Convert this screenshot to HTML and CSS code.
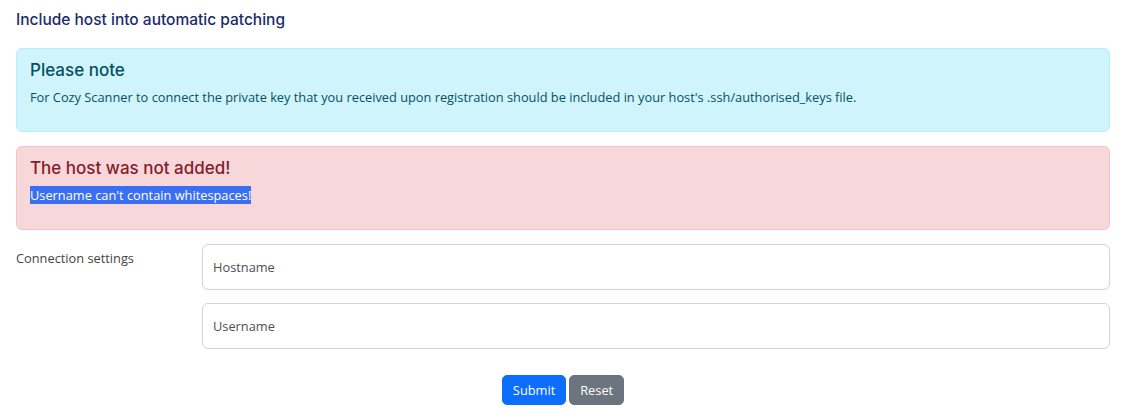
FILE: index.html
```html
<!DOCTYPE html>
<html lang="en">
<head>
<meta charset="utf-8">
<title>Include host into automatic patching</title>
<link rel="stylesheet" href="styles.css">
</head>
<body>
<div class="page">
  <h2 class="page-title">Include host into automatic patching</h2>

  <div class="alert alert-info">
    <h4 class="alert-heading">Please note</h4>
    <p class="alert-text">For Cozy Scanner to connect the private key that you received upon registration should be included in your host's .ssh/authorised_keys file.</p>
  </div>

  <div class="alert alert-danger">
    <h4 class="alert-heading">The host was not added!</h4>
    <p class="alert-text"><span class="selected">Username can't contain whitespaces!</span></p>
  </div>

  <form class="form">
    <div class="form-row">
      <label class="form-label">Connection settings</label>
      <div class="form-fields">
        <input class="form-input" type="text" placeholder="Hostname">
        <input class="form-input" type="text" placeholder="Username">
      </div>
    </div>
    <div class="form-actions">
      <button type="submit" class="btn btn-primary">Submit</button>
      <button type="reset" class="btn btn-secondary">Reset</button>
    </div>
  </form>
</div>
</body>
</html>
```

FILE: styles.css
```css
* { box-sizing: border-box; }

body {
  margin: 0;
  background: #ffffff;
  font-family: "Open Sans", "Noto Sans", sans-serif;
  font-size: 12.8px;
  color: #212529;
}

.page {
  padding: 11px 15px 16px 16px;
}

.page-title {
  margin: 0 0 19px 0;
  font-family: Inter, "Noto Sans", sans-serif;
  font-weight: 500;
  font-size: 15.5px;
  line-height: 18px;
  color: #1a2c6b;
}

.alert {
  border: 1px solid transparent;
  border-radius: 6px;
  padding: 11px 14px 13px 13px;
  margin-bottom: 14px;
}

.alert-info {
  background: #cff4fc;
  border-color: #b6effb;
  color: #055160;
}

.alert-danger {
  background: #f8d7da;
  border-color: #f5c2c7;
  color: #842029;
}

.alert-heading {
  margin: 0 0 7px 0;
  font-family: Inter, "Noto Sans", sans-serif;
  font-weight: 500;
  font-size: 17px;
  line-height: 20px;
  color: inherit;
}

.alert-text {
  margin: 0 0 11px 0;
  line-height: 20px;
}

.selected {
  background: #3a6ff2;
  color: #ffffff;
}

.form-row {
  display: grid;
  grid-template-columns: 186px 1fr;
  align-items: start;
}

.form-label {
  padding-top: 5px;
  line-height: 19.5px;
  color: #444444;
}

.form-fields {
  display: flex;
  flex-direction: column;
  gap: 13px;
}

.form-input {
  display: block;
  width: 100%;
  height: 46px;
  padding: 0 10px;
  border: 1px solid #ced4da;
  border-radius: 6px;
  background: #ffffff;
  font-family: "Open Sans", "Noto Sans", sans-serif;
  font-size: 12.8px;
  color: #212529;
}

.form-input::placeholder {
  color: #4a4f55;
  opacity: 1;
}

.form-actions {
  display: flex;
  justify-content: center;
  gap: 3px;
  margin-top: 26px;
}

.btn {
  height: 30px;
  padding: 0 10px;
  border: 1px solid transparent;
  border-radius: 5px;
  font-family: "Open Sans", "Noto Sans", sans-serif;
  font-size: 12.8px;
  color: #ffffff;
  cursor: pointer;
}

.btn-primary {
  background: #0d6efd;
  border-color: #0d6efd;
}

.btn-secondary {
  background: #6c757d;
  border-color: #6c757d;
}
```
